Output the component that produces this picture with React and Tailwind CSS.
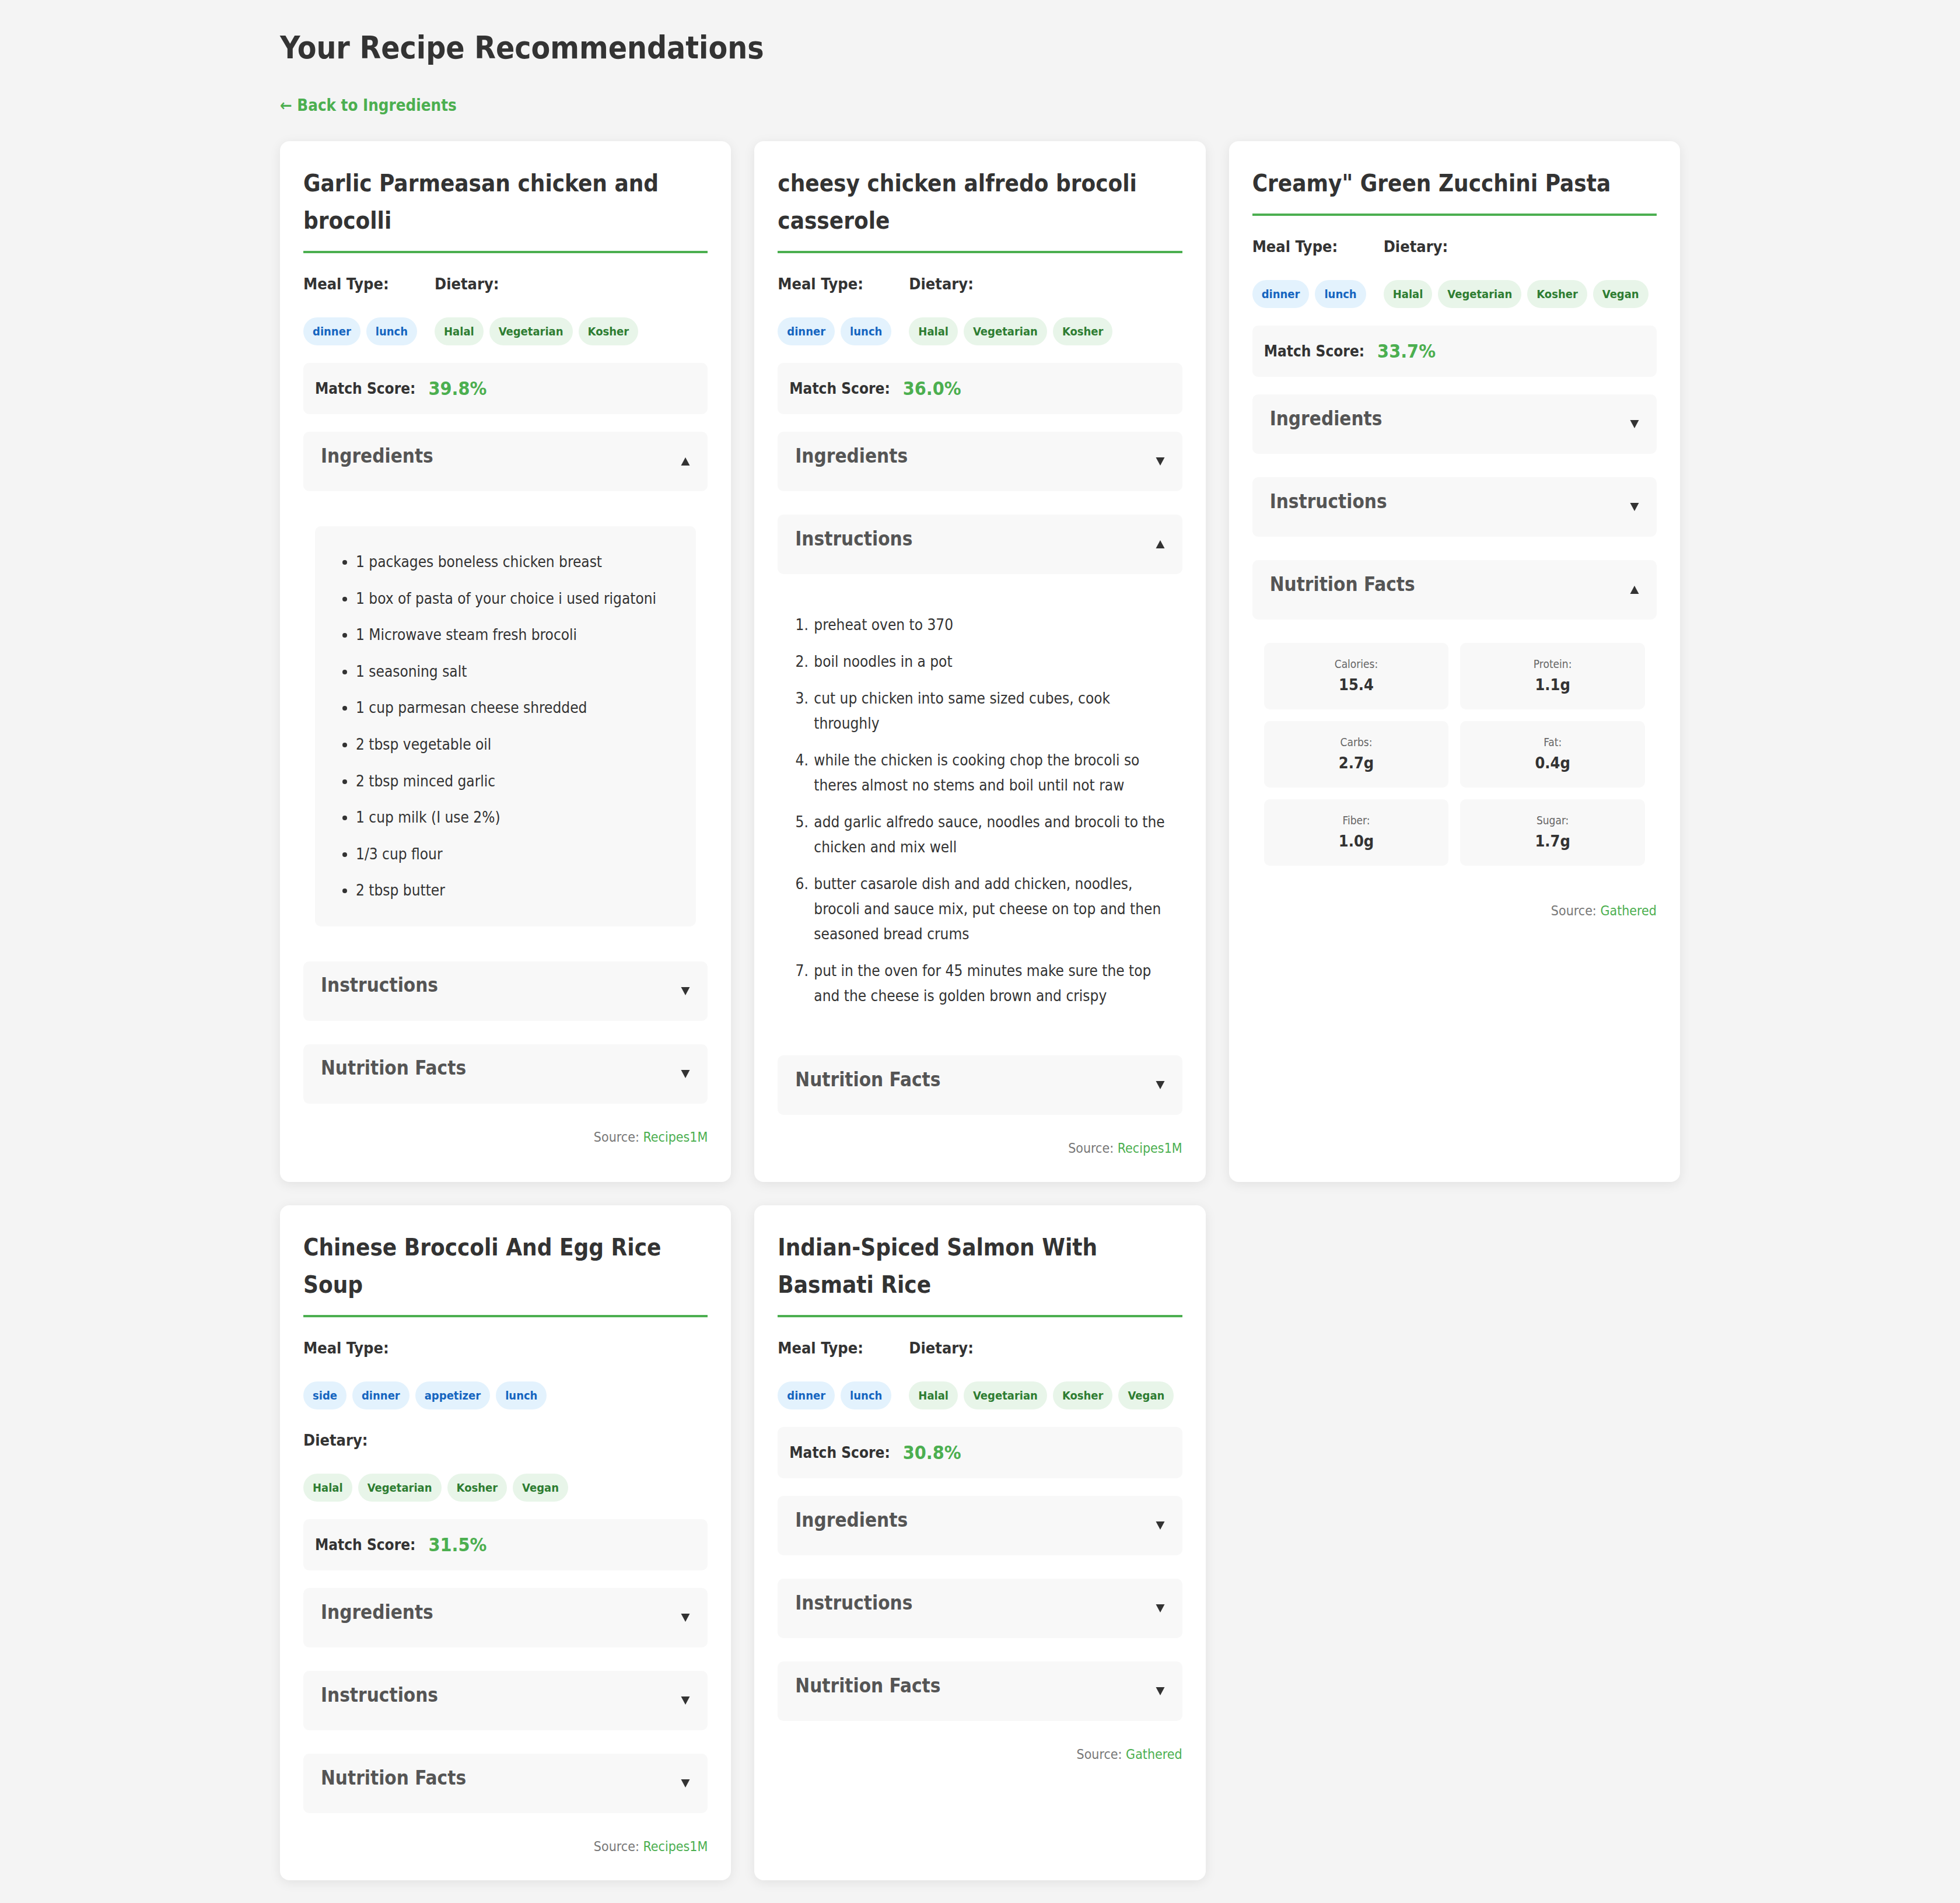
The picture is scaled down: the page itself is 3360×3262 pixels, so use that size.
import React from 'react';

const recipes = [
  {
    title: 'Garlic Parmeasan chicken and brocolli',
    meal: ['dinner', 'lunch'],
    diet: ['Halal', 'Vegetarian', 'Kosher'],
    score: '39.8%',
    open: 'ingredients',
    source: 'Recipes1M',
    ingredients: [
      '1 packages boneless chicken breast',
      '1 box of pasta of your choice i used rigatoni',
      '1 Microwave steam fresh brocoli',
      '1 seasoning salt',
      '1 cup parmesan cheese shredded',
      '2 tbsp vegetable oil',
      '2 tbsp minced garlic',
      '1 cup milk (I use 2%)',
      '1/3 cup flour',
      '2 tbsp butter',
    ],
  },
  {
    title: 'cheesy chicken alfredo brocoli casserole',
    meal: ['dinner', 'lunch'],
    diet: ['Halal', 'Vegetarian', 'Kosher'],
    score: '36.0%',
    open: 'instructions',
    source: 'Recipes1M',
    instructions: [
      'preheat oven to 370',
      'boil noodles in a pot',
      'cut up chicken into same sized cubes, cook throughly',
      'while the chicken is cooking chop the brocoli so theres almost no stems and boil until not raw',
      'add garlic alfredo sauce, noodles and brocoli to the chicken and mix well',
      'butter casarole dish and add chicken, noodles, brocoli and sauce mix, put cheese on top and then seasoned bread crums',
      'put in the oven for 45 minutes make sure the top and the cheese is golden brown and crispy',
    ],
  },
  {
    title: 'Creamy" Green Zucchini Pasta',
    meal: ['dinner', 'lunch'],
    diet: ['Halal', 'Vegetarian', 'Kosher', 'Vegan'],
    score: '33.7%',
    open: 'nutrition',
    source: 'Gathered',
    nutrition: [
      ['Calories:', '15.4'],
      ['Protein:', '1.1g'],
      ['Carbs:', '2.7g'],
      ['Fat:', '0.4g'],
      ['Fiber:', '1.0g'],
      ['Sugar:', '1.7g'],
    ],
  },
  {
    title: 'Chinese Broccoli And Egg Rice Soup',
    meal: ['side', 'dinner', 'appetizer', 'lunch'],
    diet: ['Halal', 'Vegetarian', 'Kosher', 'Vegan'],
    score: '31.5%',
    open: null,
    source: 'Recipes1M',
  },
  {
    title: 'Indian-Spiced Salmon With Basmati Rice',
    meal: ['dinner', 'lunch'],
    diet: ['Halal', 'Vegetarian', 'Kosher', 'Vegan'],
    score: '30.8%',
    open: null,
    source: 'Gathered',
  },
];

const Arrow = ({ up }) => (
  <svg width="16" height="16" viewBox="0 0 16 16" className="shrink-0">
    {up ? <polygon points="8,1 15.5,15 0.5,15" fill="#333" /> : <polygon points="0.5,1 15.5,1 8,15" fill="#333" />}
  </svg>
);

const TagGroup = ({ label, tags, kind }) => (
  <div className="flex flex-col">
    <div className="text-[27px] leading-[45px] font-bold text-[#333] mb-[35px]">{label}</div>
    <div className="flex gap-[10px]">
      {tags.map(t => (
        <span
          key={t}
          className={
            kind === 'meal'
              ? 'h-[48px] px-[16px] rounded-full flex items-center text-[20px] font-bold bg-[#e3f2fd] text-[#1565c0]'
              : 'h-[48px] px-[16px] rounded-full flex items-center text-[20px] font-bold bg-[#e8f5e9] text-[#2e7d32]'
          }
        >
          {t}
        </span>
      ))}
    </div>
  </div>
);

const Section = ({ title, open, children }) => (
  <div className="mb-[40px]">
    <div className="h-[102px] px-[30px] flex items-center justify-between bg-[#f8f8f8] rounded-[10px]">
      <h3 className="text-[33px] leading-[40px] font-bold text-[#555] mb-[19px]">{title}</h3>
      <Arrow up={open} />
    </div>
    {open && <div className="flow-root mt-[40px] px-[20px] pb-[20px]">{children}</div>}
  </div>
);

const Card = ({ r }) => (
  <div className="bg-white rounded-[16px] shadow-[0_4px_20px_rgba(0,0,0,0.08)] p-[40px]">
    <h2 className="text-[40px] leading-[64px] font-bold text-[#333] pb-[20px] border-b-4 border-[#4caf50] mb-[30px]">
      {r.title}
    </h2>
    <div className="flex flex-wrap gap-[30px] mb-[30px]">
      <TagGroup label="Meal Type:" tags={r.meal} kind="meal" />
      <TagGroup label="Dietary:" tags={r.diet} kind="diet" />
    </div>
    <div className="h-[88px] px-[20px] mb-[30px] flex items-center bg-[#f8f8f8] rounded-[10px]">
      <span className="text-[26px] leading-[45px] font-bold text-[#333]">Match Score:</span>
      <span className="ml-[22px] text-[32px] leading-[51px] font-bold text-[#4caf50]">{r.score}</span>
    </div>

    <Section title="Ingredients" open={r.open === 'ingredients'}>
      <ul className="mt-[20px] bg-[#f8f8f8] rounded-[10px] p-[30px] pl-[70px] list-disc text-[26px] text-[#333]">
        {(r.ingredients || []).map(i => (
          <li key={i} className="py-[10px] leading-[42.6px]">{i}</li>
        ))}
      </ul>
    </Section>

    <Section title="Instructions" open={r.open === 'instructions'}>
      <ol className="mt-[16px] mb-[10px] pl-[40px] list-decimal text-[26px] text-[#333]">
        {(r.instructions || []).map(i => (
          <li key={i} className="py-[10px] leading-[43px] pl-[2px]">{i}</li>
        ))}
      </ol>
    </Section>

    <Section title="Nutrition Facts" open={r.open === 'nutrition'}>
      <div className="grid grid-cols-2 gap-[20px]">
        {(r.nutrition || []).map(([k, v]) => (
          <div key={k} className="h-[114px] bg-[#f8f8f8] rounded-[10px] flex flex-col items-center justify-center">
            <span className="text-[19px] leading-[30px] text-[#666]">{k}</span>
            <span className="text-[27px] leading-[42px] font-bold text-[#333]">{v}</span>
          </div>
        ))}
      </div>
    </Section>

    <div className="text-right text-[23px] leading-[35px] text-[#777]">
      Source: <span className="text-[#4caf50]">{r.source}</span>
    </div>
  </div>
);

export default function App() {
  return (
    <div className="min-h-screen bg-[#f4f4f4] font-['DejaVu_Sans_Condensed','DejaVu_Sans',sans-serif] font-stretch-semi-condensed">
      <div className="w-[2400px] mx-auto pt-[51px] pb-[41px]">
        <h1 className="text-[53px] leading-[62px] font-bold text-[#333]">Your Recipe Recommendations</h1>
        <a href="#" className="block mt-[45px] mb-[39px] text-[27.5px] leading-[45px] font-bold text-[#4caf50]">
          ← Back to Ingredients
        </a>
        <div className="grid grid-cols-3 gap-[40px]">
          {recipes.map(r => (
            <Card key={r.title} r={r} />
          ))}
        </div>
      </div>
    </div>
  );
}
